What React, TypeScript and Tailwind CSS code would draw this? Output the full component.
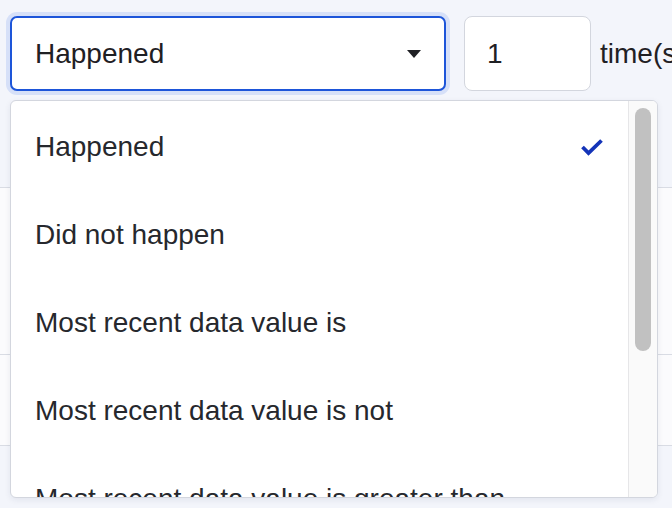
import React from "react";

const items = [
  "Happened",
  "Did not happen",
  "Most recent data value is",
  "Most recent data value is not",
  "Most recent data value is greater than",
];

export default function App() {
  return (
    <div
      className="relative w-[672px] h-[508px] overflow-hidden bg-[#f3f5fb] text-[#1f2024]"
      style={{ fontFamily: '"Liberation Sans", Arial, sans-serif' }}
    >
      {/* header row */}
      <div className="flex items-center pt-[16px] pl-[10px]">
        <div className="shrink-0 flex items-center justify-between w-[436px] h-[75px] bg-white border-2 border-[#1d55d9] rounded-[7px] ring-4 ring-[#d6e0f8] pl-[23px] pr-[23px]">
          <span className="text-[28px] leading-none">Happened</span>
          <svg width="14" height="8" viewBox="0 0 14 8">
            <polygon points="0,0 14,0 7,8" fill="#1f2024" />
          </svg>
        </div>
        <div className="shrink-0 ml-[18px] flex items-center w-[127px] h-[75px] bg-white border-[1.5px] border-[#d3d6de] rounded-[8px] pl-[22px]">
          <span className="text-[28px] leading-none">1</span>
        </div>
        <span className="shrink-0 ml-[9px] text-[28px] leading-none whitespace-nowrap">time(s)</span>
      </div>

      {/* content behind */}
      <div className="mt-[96px]">
        <div className="h-[167px] bg-[#fbfbfd] border-t border-[#d9dce4]" />
        <div className="h-[92px] bg-[#fbfbfd] border-t border-b border-[#d9dce4]" />
      </div>

      {/* dropdown menu */}
      <div className="absolute left-[10px] top-[100px] w-[648px] h-[398px] bg-white border border-[#d3d6de] rounded-[6px] shadow-[0_2px_6px_rgba(30,40,80,0.08)] flex overflow-hidden">
        <div className="flex-1 pt-[2px] overflow-hidden">
          {items.map((t, i) => (
            <div
              key={t}
              className="h-[88px] flex items-center justify-between pl-[24px] pr-[25px] text-[28px] text-[#26282d] whitespace-nowrap"
            >
              <span>{t}</span>
              {i === 0 && (
                <svg width="22" height="18" viewBox="0 0 22 18">
                  <polyline
                    points="1.5,9 7.5,15 20.5,2.5"
                    fill="none"
                    stroke="#1434b8"
                    strokeWidth="3.8"
                  />
                </svg>
              )}
            </div>
          ))}
        </div>
        <div className="w-[29px] shrink-0 bg-[#fafafa] border-l border-[#e6e6e8] pt-[7px] flex justify-center">
          <div className="w-[16px] h-[243px] rounded-full bg-[#c1c1c1]" />
        </div>
      </div>
    </div>
  );
}
